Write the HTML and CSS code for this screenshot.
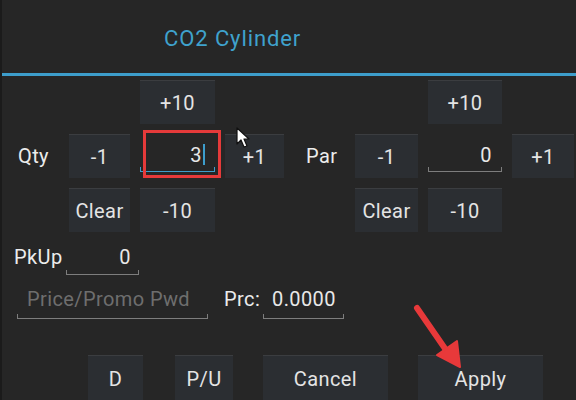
FILE: index.html
```html
<!DOCTYPE html>
<html>
<head>
<meta charset="utf-8">
<link rel="stylesheet" href="styles.css">
</head>
<body>
<div class="dialog">
  <div class="title-bar"><span class="title">CO2 Cylinder</span></div>
  <div class="divider"></div>

  <div class="grid">
    <div class="btn c2 r1">+10</div>
    <div class="btn c6 r1">+10</div>

    <div class="label c0 r2">Qty</div>
    <div class="btn c1 r2">-1</div>
    <div class="field focused c2 r2"><span class="val">3</span><span class="caret"></span></div>
    <div class="btn c3 r2">+1</div>
    <div class="label par c4 r2">Par</div>
    <div class="btn c5 r2">-1</div>
    <div class="field c6 r2"><span class="val">0</span></div>
    <div class="btn c7 r2">+1</div>

    <div class="btn c1 r3">Clear</div>
    <div class="btn c2 r3">-10</div>
    <div class="btn c5 r3">Clear</div>
    <div class="btn c6 r3">-10</div>
  </div>

  <div class="row pkup-row">
    <div class="label pk">PkUp</div>
    <div class="field pk-field"><span class="val">0</span></div>
  </div>

  <div class="row price-row">
    <div class="field promo"><span class="placeholder">Price/Promo Pwd</span></div>
    <div class="label prc">Prc:</div>
    <div class="field prc-field"><span class="val">0.0000</span></div>
  </div>

  <div class="actions">
    <div class="btn act d">D</div>
    <div class="btn act pu">P/U</div>
    <div class="btn act cancel">Cancel</div>
    <div class="btn act apply">Apply</div>
  </div>
</div>

<div class="highlight"></div>

<svg class="pointer" width="16" height="22" viewBox="0 0 16 22">
  <path d="M1 1 L1 17 L5 13 L8 20 L11 19 L8 12 L13 12 Z" fill="#ffffff" stroke="#111" stroke-width="1.2" stroke-linejoin="round"/>
</svg>

<svg class="arrow" width="70" height="80" viewBox="0 0 70 80">
  <line x1="7" y1="6" x2="36" y2="48" stroke="#e8393a" stroke-width="6" stroke-linecap="round"/>
  <polygon points="27,53 47,39 50,65" fill="#e8393a" stroke="#e8393a" stroke-width="2" stroke-linejoin="round"/>
</svg>
</body>
</html>
```

FILE: styles.css
```css
* { box-sizing: border-box; }
html, body {
  margin: 0;
  padding: 0;
}
body {
  width: 576px;
  height: 400px;
  overflow: hidden;
  background: #262626;
  font-family: Roboto, "Noto Sans", sans-serif;
  color: #e8e8e8;
  position: relative;
}
.dialog {
  height: 400px;
  border-left: 2px solid #1b1b1b;
}
.title-bar {
  height: 73px;
  padding-left: 162px;
  padding-top: 25px;
}
.title {
  font-size: 22px;
  letter-spacing: 0.9px;
  color: #3fa2cd;
  line-height: 28px;
}
.divider {
  height: 3px;
  background: #3d9dcb;
}

.grid {
  display: grid;
  margin: 4px 0 0 16px;
  grid-template-columns: 41px 61px 75px 59px 51px 63px 74px 62px;
  grid-template-rows: 44px 44px 44px;
  column-gap: 10px;
  row-gap: 10px;
}
.c0 { grid-column: 1; }
.c1 { grid-column: 2; }
.c2 { grid-column: 3; }
.c3 { grid-column: 4; }
.c4 { grid-column: 5; }
.c5 { grid-column: 6; }
.c6 { grid-column: 7; }
.c7 { grid-column: 8; }
.r1 { grid-row: 1; }
.r2 { grid-row: 2; }
.r3 { grid-row: 3; }

.btn {
  background: #2b2e32;
  border-top: 1px solid #3b3d40;
  display: flex;
  align-items: center;
  justify-content: center;
  font-size: 20px;
  letter-spacing: 0.4px;
  color: #e4e4e4;
}
.label {
  display: flex;
  align-items: center;
  font-size: 20px;
  letter-spacing: 0.4px;
  color: #ececec;
}
.par { padding-left: 12px; }

.field {
  position: relative;
  display: flex;
  align-items: center;
  justify-content: flex-end;
  border-bottom: 1px solid #7d7d7d;
  font-size: 20px;
  letter-spacing: 0.4px;
  color: #e8e8e8;
}
.field::before, .field::after {
  content: "";
  position: absolute;
  bottom: 0;
  width: 1px;
  height: 4px;
  background: #7d7d7d;
}
.field::before { left: 0; }
.field::after { right: 0; }
.grid .field {
  margin-bottom: 6px;
  padding-right: 10px;
  padding-top: 4px;
}
.field.focused { border-bottom-color: #3d9dcb; }
.field.focused::before, .field.focused::after { background: #3d9dcb; }
.caret {
  width: 2px;
  height: 21px;
  background: #3d9dcb;
  margin-left: 1px;
}

.row {
  display: flex;
  align-items: flex-end;
}
.pkup-row {
  margin-top: 11px;
  height: 32px;
  padding-left: 12px;
}
.pk { height: 32px; width: 52px; padding-bottom: 4px; }
.pk-field {
  width: 73px;
  height: 32px;
  padding-right: 8px;
  padding-bottom: 4px;
}
.price-row {
  margin-top: 10px;
  height: 34px;
  padding-left: 15px;
}
.promo {
  width: 191px;
  height: 34px;
  justify-content: flex-start;
  padding-left: 10px;
  padding-bottom: 6px;
}
.placeholder { color: #6e6e6e; }
.prc {
  margin-left: 16px;
  height: 34px;
  width: 39px;
  padding-bottom: 6px;
}
.prc-field {
  width: 81px;
  height: 34px;
  justify-content: flex-start;
  padding-left: 9px;
  padding-bottom: 6px;
}

.actions {
  display: flex;
  margin-top: 36px;
  padding-left: 86px;
}
.act { height: 46px; }
.d { width: 55px; }
.pu { width: 58px; margin-left: 32px; }
.cancel { width: 125px; margin-left: 30px; }
.apply { width: 125px; margin-left: 30px; }

.highlight {
  position: absolute;
  left: 143px;
  top: 130px;
  width: 78px;
  height: 48px;
  border: 3px solid #e53a3a;
}
.pointer {
  position: absolute;
  left: 236px;
  top: 127px;
}
.arrow {
  position: absolute;
  left: 410px;
  top: 302px;
}
```
